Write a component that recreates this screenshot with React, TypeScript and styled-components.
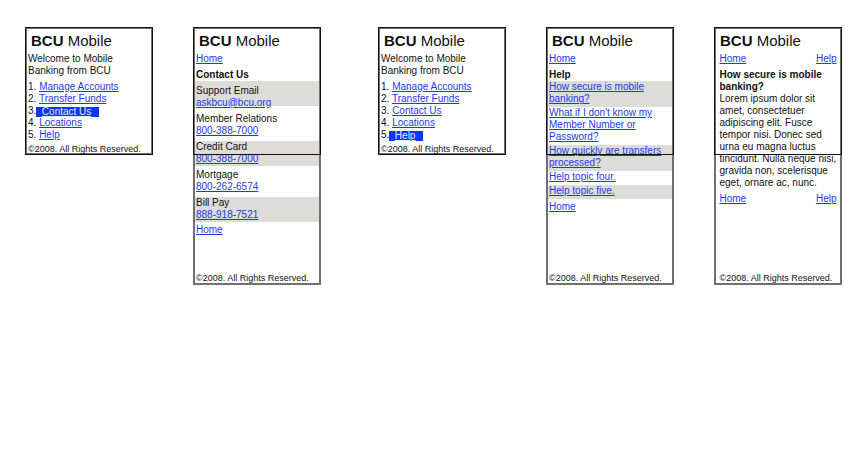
import React from 'react';
import styled, { createGlobalStyle } from 'styled-components';

const GlobalStyle = createGlobalStyle`
  html, body {
    margin: 0;
    padding: 0;
    background: #fff;
  }
  body {
    font-family: "Liberation Sans", Arial, Helvetica, sans-serif;
    color: #111;
  }
`;

const Page = styled.div`
  display: flex;
  align-items: flex-start;
  gap: 57px;
  padding: 27px 0 0 25px;
`;

const Flow = styled.div`
  display: flex;
  align-items: flex-start;
  gap: 40px;
`;

const Screen = styled.div<{ $tall?: boolean; $inset?: number }>`
  position: relative;
  box-sizing: border-box;
  width: 128px;
  height: ${(p) => (p.$tall ? 258 : 128)}px;
  border: 2px solid #707070;
  padding: 0 ${(p) => p.$inset ?? 1}px;
  display: flex;
  flex-direction: column;
  font-size: 10px;
  line-height: 12px;
`;

// the visible phone screen, drawn over the full page
const Viewport = styled.div`
  position: absolute;
  top: -2px;
  left: -2px;
  right: -2px;
  height: 128px;
  box-sizing: border-box;
  border: 1px solid #111;
  pointer-events: none;
`;

const Brand = styled.div<{ $indent?: number }>`
  font-size: 15px;
  line-height: 17px;
  margin: 3.3px 0 4px;
  padding-left: ${(p) => p.$indent ?? 3}px;
  white-space: nowrap;

  b {
    font-weight: bold;
  }
`;

const Link = styled.a`
  color: #1f38f2;
  text-decoration: underline;
  cursor: pointer;
`;

const Intro = styled.p`
  margin: 0 0 3.6px;
`;

const Menu = styled.div`
  display: flex;
  flex-direction: column;
  white-space: nowrap;
`;

const Selected = styled.span`
  display: inline-block;
  line-height: 10px;
  height: 10px;
  vertical-align: -1px;
  padding: 0 8px 0 5.5px;
  background: #0a36ff;
  color: #e4e8ff;
  text-decoration: underline;
`;

const Crumb = styled.div`
  margin-bottom: 4px;
`;

const SectionTitle = styled.div`
  font-weight: bold;
`;

const ContactItem = styled.div<{ $shaded?: boolean; $first?: boolean }>`
  box-sizing: border-box;
  height: 25px;
  margin: 0 -1px ${(p) => (p.$first ? 6.5 : 3)}px;
  padding: ${(p) => (p.$first ? 3.5 : 0)}px 1px 0;
  background: ${(p) => (p.$shaded ? '#dddcd8' : 'transparent')};
`;

const HelpItem = styled.div<{ $shaded?: boolean }>`
  margin: 0 -1px 0.5px;
  padding: 0 1px 1.5px;
  background: ${(p) => (p.$shaded ? '#dddcd8' : 'transparent')};
`;

const FooterLink = styled.div<{ $top?: number }>`
  margin-top: ${(p) => p.$top ?? 0}px;
`;

const NavRow = styled.div<{ $top?: number }>`
  display: flex;
  justify-content: space-between;
  margin-top: ${(p) => p.$top ?? 0}px;
  margin-bottom: 4px;
`;

const ArticleTitle = styled.div`
  font-weight: bold;
`;

const ArticleBody = styled.p`
  margin: 0;
`;

const Copyright = styled.div<{ $tall?: boolean }>`
  margin-top: auto;
  margin-bottom: ${(p) => (p.$tall ? -1 : -2)}px;
  font-size: 9px;
  line-height: 12px;
  white-space: nowrap;
`;

const menuLabels = ['Manage Accounts', 'Transfer Funds', 'Contact Us', 'Locations', 'Help'];

const HomeScreen: React.FC<{ selected: number }> = ({ selected }) => (
  <Screen>
    <Viewport />
    <Brand>
      <b>BCU</b> Mobile
    </Brand>
    <Intro>
      Welcome to Mobile
      <br />
      Banking from BCU
    </Intro>
    <Menu>
      {menuLabels.map((label, i) => (
        <div key={label}>
          {i + 1}.
          {i === selected ? (
            <Selected>{label}</Selected>
          ) : (
            <>
              {' '}
              <Link>{label}</Link>
            </>
          )}
        </div>
      ))}
    </Menu>
    <Copyright>©2008. All Rights Reserved.</Copyright>
  </Screen>
);

const contacts = [
  { label: 'Support Email', value: 'askbcu@bcu.org' },
  { label: 'Member Relations', value: '800-388-7000' },
  { label: 'Credit Card', value: '800-388-7000' },
  { label: 'Mortgage', value: '800-262-6574' },
  { label: 'Bill Pay', value: '888-918-7521' },
];

const ContactScreen: React.FC = () => (
  <Screen $tall>
    <Viewport />
    <Brand>
      <b>BCU</b> Mobile
    </Brand>
    <Crumb>
      <Link>Home</Link>
    </Crumb>
    <SectionTitle>Contact Us</SectionTitle>
    {contacts.map((c, i) => (
      <ContactItem key={c.label} $shaded={i % 2 === 0} $first={i === 0}>
        {c.label}
        <br />
        <Link>{c.value}</Link>
      </ContactItem>
    ))}
    <FooterLink $top={-0.5}>
      <Link>Home</Link>
    </FooterLink>
    <Copyright $tall>©2008. All Rights Reserved.</Copyright>
  </Screen>
);

const topics = [
  'How secure is mobile banking?',
  "What if I don't know my Member Number or Password?",
  'How quickly are transfers processed?',
  'Help topic four.',
  'Help topic five.',
];

const HelpScreen: React.FC = () => (
  <Screen $tall>
    <Viewport />
    <Brand>
      <b>BCU</b> Mobile
    </Brand>
    <Crumb>
      <Link>Home</Link>
    </Crumb>
    <SectionTitle>Help</SectionTitle>
    {topics.map((t, i) => (
      <HelpItem key={t} $shaded={i % 2 === 0}>
        <Link>{t}</Link>
      </HelpItem>
    ))}
    <FooterLink $top={2}>
      <Link>Home</Link>
    </FooterLink>
    <Copyright $tall>©2008. All Rights Reserved.</Copyright>
  </Screen>
);

const ArticleScreen: React.FC = () => (
  <Screen $tall $inset={3.5}>
    <Viewport />
    <Brand $indent={0.5}>
      <b>BCU</b> Mobile
    </Brand>
    <NavRow>
      <Link>Home</Link>
      <Link>Help</Link>
    </NavRow>
    <ArticleTitle>How secure is mobile banking?</ArticleTitle>
    <ArticleBody>
      Lorem ipsum dolor sit amet, consectetuer adipiscing elit. Fusce tempor nisi. Donec sed
      urna eu magna luctus tincidunt. Nulla neque nisi, gravida non, scelerisque eget, ornare
      ac, nunc.
    </ArticleBody>
    <NavRow $top={4}>
      <Link>Home</Link>
      <Link>Help</Link>
    </NavRow>
    <Copyright $tall>©2008. All Rights Reserved.</Copyright>
  </Screen>
);

const App: React.FC = () => (
  <>
    <GlobalStyle />
    <Page>
      <Flow>
        <HomeScreen selected={2} />
        <ContactScreen />
      </Flow>
      <Flow>
        <HomeScreen selected={4} />
        <HelpScreen />
        <ArticleScreen />
      </Flow>
    </Page>
  </>
);

export default App;
